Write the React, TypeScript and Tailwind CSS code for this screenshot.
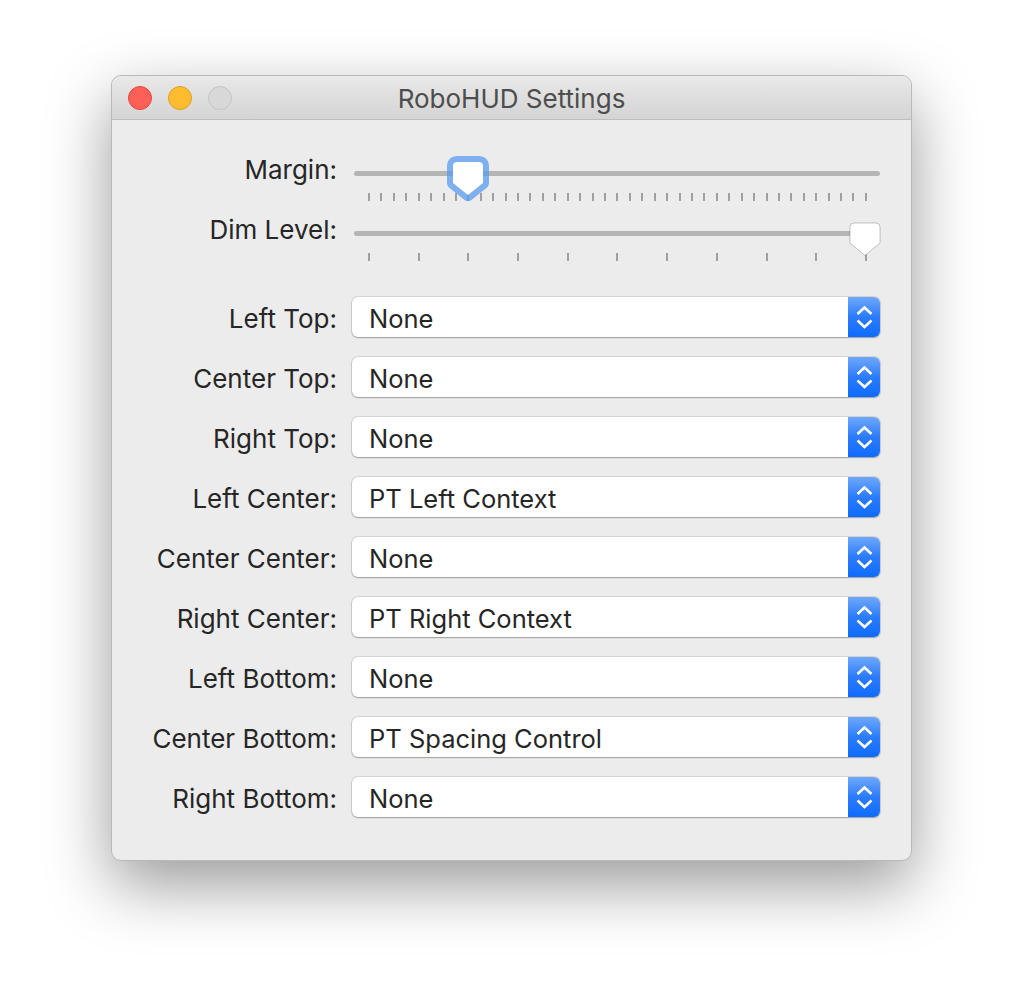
import React from 'react';

const FONT = { fontFamily: 'Inter, "Noto Sans", "Liberation Sans", sans-serif' };

const POPUPS = [
  { label: 'Left Top:', value: 'None' },
  { label: 'Center Top:', value: 'None' },
  { label: 'Right Top:', value: 'None' },
  { label: 'Left Center:', value: 'PT Left Context' },
  { label: 'Center Center:', value: 'None' },
  { label: 'Right Center:', value: 'PT Right Context' },
  { label: 'Left Bottom:', value: 'None' },
  { label: 'Center Bottom:', value: 'PT Spacing Control' },
  { label: 'Right Bottom:', value: 'None' },
];

// tick span inside the 528px control: first tick centre at 17px, last at 513px
const TICK_SPAN = 496;

function FocusedKnob() {
  const d = 'M10 6 H32 Q36 6 36 10 V27 L21 39 L6 27 V10 Q6 6 10 6 Z';
  return (
    <svg width="42" height="46" viewBox="0 0 42 46">
      <g opacity="0.75">
        <path d={d} fill="#5a9cf2" stroke="#5a9cf2" strokeWidth="12" strokeLinejoin="round" />
      </g>
      <path d={d} fill="#ffffff" />
    </svg>
  );
}

function PlainKnob() {
  return (
    <svg width="32" height="35" viewBox="0 0 32 35">
      <path
        d="M5 1 H27 Q31 1 31 5 V21 L16 33.5 L1 21 V5 Q1 1 5 1 Z"
        fill="#ffffff"
        stroke="rgba(0,0,0,0.22)"
        strokeWidth="1"
      />
    </svg>
  );
}

function Slider({ ticks, value, focused }: { ticks: number; value: number; focused?: boolean }) {
  const centre = 17 + (value / (ticks - 1)) * TICK_SPAN;
  const left = centre - (focused ? 21 : 16);
  return (
    <div className="relative h-[60px] w-[528px] shrink-0 pt-[18px]">
      <div className="ml-[2px] h-[5px] rounded-full bg-[#b5b5b5]" />
      <div className="mt-[17px] flex justify-between pl-[16px] pr-[13px]">
        {Array.from({ length: ticks }).map((_, i) => (
          <div key={i} className="h-[8px] w-[2px] bg-[#a0a0a0]" />
        ))}
      </div>
      <div className="absolute" style={{ left, top: focused ? 3 : 9 }}>
        {focused ? <FocusedKnob /> : <PlainKnob />}
      </div>
    </div>
  );
}

function Popup({ value }: { value: string }) {
  return (
    <div className="flex h-[40px] w-[528px] shrink-0 rounded-[6px] bg-white shadow-[0_0_0_1px_rgba(0,0,0,0.1),0_1px_1.5px_rgba(0,0,0,0.25)]">
      <div className="h-[40px] flex-1 pl-[17px] pt-[4px] text-[25.5px] leading-[36px] text-[#262626]">{value}</div>
      <div className="h-[40px] w-[32px] rounded-r-[6px] bg-linear-to-b from-[#6da8fb] via-[#2a7bfd] to-[#0c6bfd]">
        <svg width="32" height="40" viewBox="0 0 32 40" fill="none" stroke="#ffffff" strokeWidth="2.5">
          <path d="M9.5 17 L16.5 10.5 L23.5 17" />
          <path d="M9.5 23.5 L16.5 30 L23.5 23.5" />
        </svg>
      </div>
    </div>
  );
}

function Label({ text, tall }: { text: string; tall?: boolean }) {
  return (
    <div
      className={`w-[240px] shrink-0 pr-[15px] text-right text-[26px] text-[#262626] ${
        tall ? 'h-[40px] pt-[4px] leading-[36px]' : 'leading-[34px]'
      }`}
    >
      {text}
    </div>
  );
}

export default function App() {
  return (
    <div className="min-h-[1008px] bg-white pl-[111px] pt-[75px]" style={FONT}>
      <div className="w-[801px] overflow-hidden rounded-[10px] border border-[#b9b9b9] bg-[#ececec] shadow-[0_24px_65px_rgba(0,0,0,0.4)]">
        {/* Title bar */}
        <div className="relative flex h-[44px] items-center border-b border-[#bdbdbd] bg-linear-to-b from-[#e9e9e9] to-[#d4d4d4]">
          <div className="flex gap-[16px] pl-[16px]">
            <div className="h-[24px] w-[24px] rounded-full border border-[#e2463f] bg-[#fe5f57]" />
            <div className="h-[24px] w-[24px] rounded-full border border-[#dfa023] bg-[#febc2e]" />
            <div className="h-[24px] w-[24px] rounded-full border border-[#c4c4c4] bg-[#d8d8d8]" />
          </div>
          <div className="absolute inset-x-0 pt-[2px] text-center text-[26px] text-[#4d4d4d]">RoboHUD Settings</div>
        </div>

        {/* Content */}
        <div className="pb-[43px] pt-[33px]">
          <div className="flex">
            <Label text="Margin:" />
            <Slider ticks={41} value={8} focused />
          </div>
          <div className="flex">
            <Label text="Dim Level:" />
            <Slider ticks={11} value={10} />
          </div>
          <div className="mt-[24px] flex flex-col gap-[20px]">
            {POPUPS.map(p => (
              <div key={p.label} className="flex">
                <Label text={p.label} tall />
                <Popup value={p.value} />
              </div>
            ))}
          </div>
        </div>
      </div>
    </div>
  );
}
